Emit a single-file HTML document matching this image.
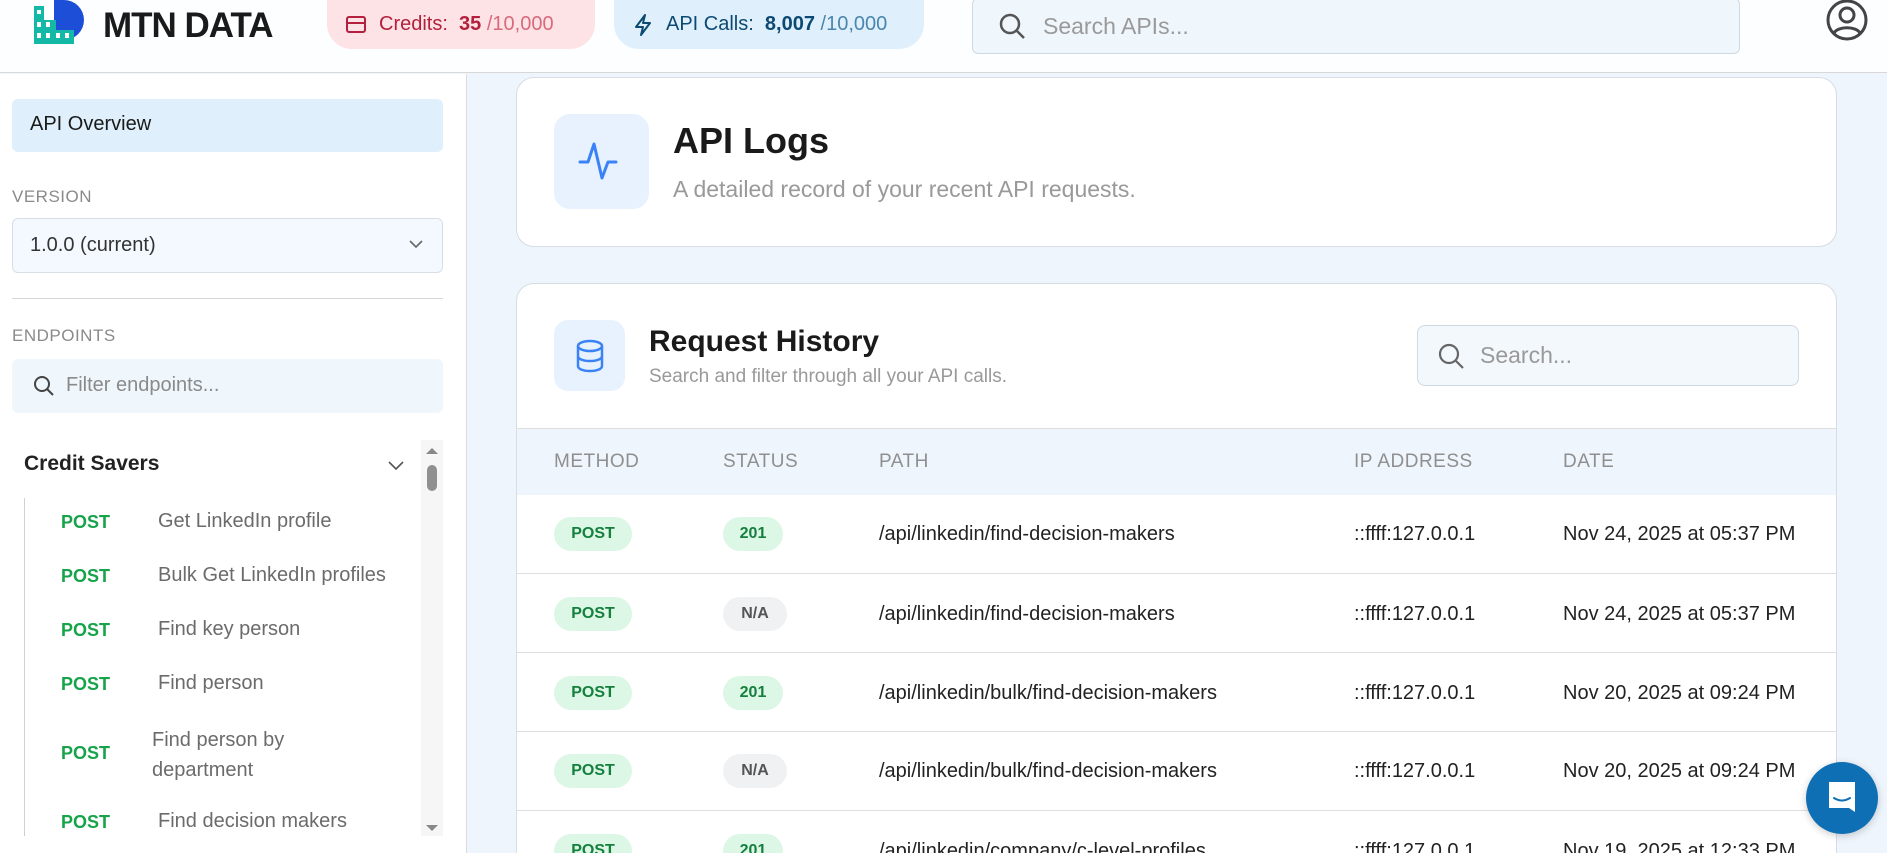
<!DOCTYPE html>
<html style="width:1887px;height:853px;overflow:hidden"><head><meta charset="utf-8"><style>
*{box-sizing:border-box;margin:0;padding:0}
body{width:1887px;height:853px;overflow:hidden;font-family:"Liberation Sans",sans-serif;background:#eef5fc;position:relative;color:#1a1a1a}
.a{position:absolute}
.hdr{left:0;top:0;width:1887px;height:73px;background:#fdfeff;border-bottom:1px solid #d8d8d8}
.side{left:0;top:74px;width:467px;height:779px;background:#fff;border-right:1px solid #dcdcdc}
.pill{height:49px;top:0;border-radius:0 0 25px 25px;display:flex;align-items:center;font-size:20px}
.lbl{font-size:17px;color:#8a8a8a;letter-spacing:0.5px}
.item{left:61px;font-size:18px;font-weight:bold;color:#16a34a}
.nm{left:158px;font-size:20px;color:#6b6b6b}
.card{background:#fff;border:1px solid #d6dde4;border-radius:18px}
.th{font-size:19px;color:#8f8f8f;top:451px;letter-spacing:0.5px}
.row{left:517px;width:1319px;height:79px;border-bottom:1px solid #dedede}
.badge{height:34px;border-radius:17px;font-size:16px;font-weight:bold;display:flex;align-items:center;justify-content:center}
.post{background:#dcf7e5;color:#15803d;width:78px;left:554px}
.ok{background:#dcf7e5;color:#15803d;width:60px;left:723px}
.na{background:#f0f1f3;color:#555;width:64px;left:723px}
.td{font-size:20px;color:#222}
</style></head><body>
<div class="a hdr"></div>
<svg class="a" style="left:34px;top:0" width="50" height="44" viewBox="0 0 50 44"><path d="M20 0h10a20 20 0 0 1 0 40H20z" fill="#1d4ed8"/><rect x="0" y="6" width="10" height="38" fill="#14b8a6"/><rect x="0" y="20" width="22" height="24" fill="#14b8a6"/><rect x="0" y="30" width="40" height="14" fill="#14b8a6"/><g fill="#fff"><rect x="3" y="10" width="4" height="4"/><rect x="3" y="22" width="4" height="5"/><rect x="12" y="22" width="4" height="5"/><rect x="3" y="33" width="4" height="5"/><rect x="12" y="33" width="4" height="5"/><rect x="22" y="33" width="4" height="5"/><rect x="31" y="33" width="4" height="5"/></g></svg>
<div class="a" style="left:103px;top:6px;font-size:35px;font-weight:bold;letter-spacing:-1px">MTN DATA</div>
<div class="a pill" style="left:327px;width:268px;background:#fde3e5;color:#b3203d;padding-left:18px">
<svg width="22" height="20" viewBox="0 0 22 20"><rect x="2" y="2" width="18" height="15" rx="2" fill="none" stroke="#b3203d" stroke-width="2"/><line x1="2" y1="8" x2="20" y2="8" stroke="#b3203d" stroke-width="2"/></svg>
<span style="margin-left:12px">Credits:&nbsp; <b>35</b> <span style="color:#d86a7c">/10,000</span></span></div>
<div class="a pill" style="left:614px;width:310px;background:#dff0fc;color:#0c4a73;padding-left:18px">
<svg width="22" height="24" viewBox="0 0 22 24"><path d="M13 2L4 14h7l-2 8 9-12h-7z" fill="none" stroke="#0c4a73" stroke-width="2" stroke-linejoin="round"/></svg>
<span style="margin-left:12px">API Calls:&nbsp; <b>8,007</b> <span style="color:#4a86ad">/10,000</span></span></div>
<div class="a" style="left:972px;top:-2px;width:768px;height:56px;background:#eff6fc;border:1px solid #cfd9e2;border-radius:6px;display:flex;align-items:center;padding-left:24px;font-size:23px;color:#9a9a9a">
<svg width="30" height="30" viewBox="0 0 30 30"><circle cx="13" cy="13" r="9" fill="none" stroke="#555" stroke-width="2.5"/><line x1="20" y1="20" x2="27" y2="27" stroke="#555" stroke-width="2.5"/></svg><span style="margin-left:16px">Search APIs...</span></div>
<svg class="a" style="left:1825px;top:0" width="44" height="44" viewBox="0 0 44 44"><circle cx="22" cy="20" r="19" fill="none" stroke="#444" stroke-width="3"/><circle cx="22" cy="15" r="7" fill="none" stroke="#444" stroke-width="3"/><path d="M9 33c4-7 22-7 26 0" fill="none" stroke="#444" stroke-width="3"/></svg>

<div class="a side"></div>
<div class="a" style="left:12px;top:99px;width:431px;height:53px;background:#dff0fc;border-radius:6px;font-size:20px;padding:14px 0 0 18px">API Overview</div>
<div class="a lbl" style="left:12px;top:187px">VERSION</div>
<div class="a" style="left:12px;top:218px;width:431px;height:55px;background:#f3f9fe;border:1px solid #d6dfe7;border-radius:6px;font-size:20px;color:#333;padding:15px 0 0 17px">1.0.0 (current)</div>
<svg class="a" style="left:408px;top:239px" width="16" height="10"><path d="M2 2l6 6 6-6" fill="none" stroke="#666" stroke-width="1.6"/></svg>
<div class="a" style="left:12px;top:298px;width:431px;height:1px;background:#d6d6d6"></div>
<div class="a lbl" style="left:12px;top:326px">ENDPOINTS</div>
<div class="a" style="left:12px;top:359px;width:431px;height:54px;background:#eff6fc;border-radius:6px;font-size:20px;color:#8a8a8a;padding:15px 0 0 20px;display:flex">
<svg width="24" height="24" viewBox="0 0 24 24"><circle cx="10" cy="10" r="7" fill="none" stroke="#444" stroke-width="2"/><line x1="15" y1="15" x2="21" y2="21" stroke="#444" stroke-width="2"/></svg><span style="margin-left:10px">Filter endpoints...</span></div>
<div class="a" style="left:24px;top:452px;font-size:21px;font-weight:bold;color:#222">Credit Savers</div>
<svg class="a" style="left:387px;top:460px" width="18" height="12"><path d="M2 2l7 7 7-7" fill="none" stroke="#555" stroke-width="1.6"/></svg>
<div class="a" style="left:421px;top:440px;width:22px;height:396px;background:#f6f6f6"></div>
<svg class="a" style="left:424px;top:444px" width="16" height="392"><path d="M2 10l6-6 6 6z" fill="#888"/><rect x="3" y="21" width="10" height="26" rx="5" fill="#909090"/><path d="M2 381l6 6 6-6z" fill="#888"/></svg>
<div class="a" style="left:24px;top:498px;width:1px;height:338px;background:#d0d0d0"></div>
<div class="a item" style="top:512px">POST</div><div class="a nm" style="top:510px">Get LinkedIn profile</div>
<div class="a item" style="top:566px">POST</div><div class="a nm" style="top:564px">Bulk Get LinkedIn profiles</div>
<div class="a item" style="top:620px">POST</div><div class="a nm" style="top:618px">Find key person</div>
<div class="a item" style="top:674px">POST</div><div class="a nm" style="top:672px">Find person</div>
<div class="a item" style="top:743px">POST</div><div class="a nm" style="left:152px;top:725px;line-height:30px">Find person by<br>department</div>
<div class="a item" style="top:812px">POST</div><div class="a nm" style="top:810px">Find decision makers</div>

<div class="a card" style="left:516px;top:77px;width:1321px;height:170px"></div>
<div class="a" style="left:554px;top:114px;width:95px;height:95px;background:#e8f2fe;border-radius:16px"></div>
<svg class="a" style="left:574px;top:134px" width="56" height="56" viewBox="0 0 56 56"><path d="M6 28h8l6-18 8 34 6-16h8" fill="none" stroke="#3b82f6" stroke-width="3" stroke-linecap="round" stroke-linejoin="round"/></svg>
<div class="a" style="left:673px;top:120px;font-size:36px;font-weight:bold">API Logs</div>
<div class="a" style="left:673px;top:176px;font-size:23px;color:#999">A detailed record of your recent API requests.</div>

<div class="a card" style="left:516px;top:283px;width:1321px;height:590px;border-bottom:none;border-radius:18px 18px 0 0"></div>
<div class="a" style="left:554px;top:320px;width:71px;height:71px;background:#e8f2fe;border-radius:14px"></div>
<svg class="a" style="left:572px;top:338px" width="36" height="36" viewBox="0 0 36 36"><ellipse cx="18" cy="8" rx="12" ry="5" fill="none" stroke="#3b82f6" stroke-width="2.5"/><path d="M6 8v20c0 3 5 5 12 5s12-2 12-5V8M6 18c0 3 5 5 12 5s12-2 12-5" fill="none" stroke="#3b82f6" stroke-width="2.5"/></svg>
<div class="a" style="left:649px;top:325px;font-size:30px;font-weight:bold">Request History</div>
<div class="a" style="left:649px;top:366px;font-size:19px;color:#999">Search and filter through all your API calls.</div>
<div class="a" style="left:1417px;top:325px;width:382px;height:61px;background:#f3f8fd;border:1px solid #cfd9e2;border-radius:8px;display:flex;align-items:center;padding-left:18px;font-size:23px;color:#999">
<svg width="30" height="30" viewBox="0 0 30 30"><circle cx="13" cy="13" r="9" fill="none" stroke="#666" stroke-width="2.2"/><line x1="20" y1="20" x2="27" y2="27" stroke="#666" stroke-width="2.2"/></svg><span style="margin-left:14px">Search...</span></div>
<div class="a" style="left:517px;top:428px;width:1319px;height:67px;background:#eef5fc;border-top:1px solid #dedede"></div>
<div class="a th" style="left:554px">METHOD</div><div class="a th" style="left:723px">STATUS</div><div class="a th" style="left:879px">PATH</div><div class="a th" style="left:1354px">IP ADDRESS</div><div class="a th" style="left:1563px">DATE</div>

<div class="a row" style="top:495px"></div><div class="a row" style="top:574px"></div><div class="a row" style="top:653px"></div><div class="a row" style="top:732px"></div>

<div class="a badge post" style="top:517px">POST</div><div class="a badge ok" style="top:517px">201</div>
<div class="a td" style="left:879px;top:523px">/api/linkedin/find-decision-makers</div><div class="a td" style="left:1354px;top:523px">::ffff:127.0.0.1</div><div class="a td" style="left:1563px;top:523px">Nov 24, 2025 at 05:37 PM</div>
<div class="a badge post" style="top:597px">POST</div><div class="a badge na" style="top:597px">N/A</div>
<div class="a td" style="left:879px;top:603px">/api/linkedin/find-decision-makers</div><div class="a td" style="left:1354px;top:603px">::ffff:127.0.0.1</div><div class="a td" style="left:1563px;top:603px">Nov 24, 2025 at 05:37 PM</div>
<div class="a badge post" style="top:676px">POST</div><div class="a badge ok" style="top:676px">201</div>
<div class="a td" style="left:879px;top:682px">/api/linkedin/bulk/find-decision-makers</div><div class="a td" style="left:1354px;top:682px">::ffff:127.0.0.1</div><div class="a td" style="left:1563px;top:682px">Nov 20, 2025 at 09:24 PM</div>
<div class="a badge post" style="top:754px">POST</div><div class="a badge na" style="top:754px">N/A</div>
<div class="a td" style="left:879px;top:760px">/api/linkedin/bulk/find-decision-makers</div><div class="a td" style="left:1354px;top:760px">::ffff:127.0.0.1</div><div class="a td" style="left:1563px;top:760px">Nov 20, 2025 at 09:24 PM</div>
<div class="a badge post" style="top:834px">POST</div><div class="a badge ok" style="top:834px">201</div>
<div class="a td" style="left:879px;top:840px">/api/linkedin/company/c-level-profiles</div><div class="a td" style="left:1354px;top:840px">::ffff:127.0.0.1</div><div class="a td" style="left:1563px;top:840px">Nov 19, 2025 at 12:33 PM</div>

<div class="a" style="left:1806px;top:762px;width:72px;height:72px;border-radius:50%;background:#0f6fb5;box-shadow:0 2px 8px rgba(0,0,0,.2)"></div>
<svg class="a" style="left:1826px;top:780px" width="32" height="36" viewBox="0 0 32 36"><path d="M3 2h26v30l-6-4H3z" fill="#fff"/><path d="M8 18q8 5 16 0" fill="none" stroke="#0f6fb5" stroke-width="2" stroke-linecap="round"/></svg>
</body></html>
